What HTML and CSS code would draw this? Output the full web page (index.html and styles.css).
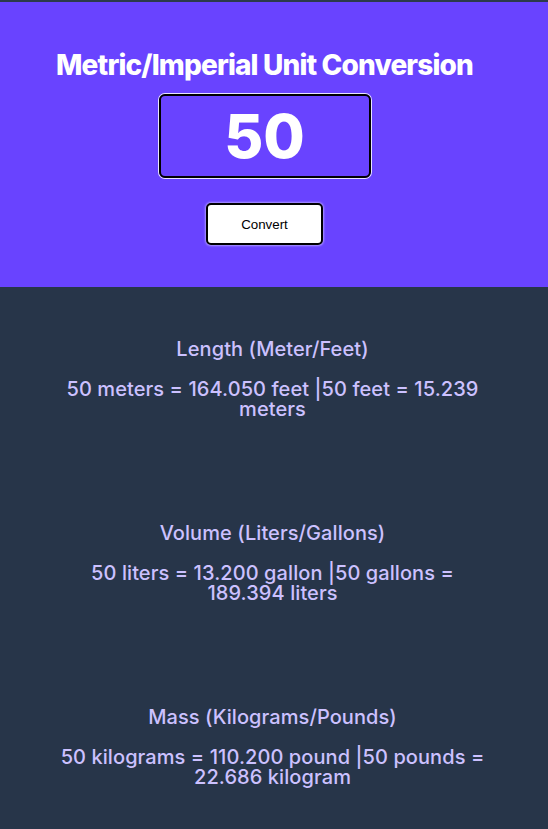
FILE: index.html
```html
<!DOCTYPE html>
<html lang="en">
<head>
<meta charset="utf-8">
<title>Unit Converter</title>
<link rel="stylesheet" href="styles.css">
</head>
<body>
<main class="page">
  <header class="hero">
    <h1 class="hero-title">Metric/Imperial Unit Conversion</h1>
    <input class="hero-input" type="text" value="50">
    <button class="hero-button" type="button">Convert</button>
  </header>
  <section class="results">
    <div class="card">
      <h2 class="card-title">Length (Meter/Feet)</h2>
      <p class="card-text">50 meters = 164.050 feet |50 feet = 15.239 meters</p>
    </div>
    <div class="card">
      <h2 class="card-title">Volume (Liters/Gallons)</h2>
      <p class="card-text">50 liters = 13.200 gallon |50 gallons = 189.394 liters</p>
    </div>
    <div class="card">
      <h2 class="card-title">Mass (Kilograms/Pounds)</h2>
      <p class="card-text">50 kilograms = 110.200 pound |50 pounds = 22.686 kilogram</p>
    </div>
  </section>
</main>
</body>
</html>
```

FILE: styles.css
```css
* {
  box-sizing: border-box;
}

html, body {
  margin: 0;
  padding: 0;
  background: #273549;
}

body {
  font-family: Inter, "Noto Sans", sans-serif;
  min-height: 829px;
}

.page {
  border-top: 2px solid #2c3a4b;
}

.hero {
  background: #6943ff;
  display: flex;
  flex-direction: column;
  align-items: center;
  padding: 46px 19px 42px 0;
}

.hero-title {
  margin: 0;
  color: #ffffff;
  font-size: 28px;
  font-weight: 800;
  letter-spacing: -0.85px;
  line-height: 34px;
}

.hero-input {
  margin-top: 12px;
  width: 212px;
  height: 84px;
  border: 2px solid #000;
  border-radius: 6px;
  box-shadow: 0 0 0 1px rgba(255, 255, 255, 0.85);
  background: transparent;
  color: #ffffff;
  font-family: Inter, sans-serif;
  font-weight: 800;
  font-size: 60px;
  text-align: center;
  padding: 0;
}

.hero-button {
  margin-top: 25px;
  width: 117px;
  height: 42px;
  border: 2px solid #000;
  border-radius: 5px;
  background: #ffffff;
  box-shadow: 0 0 2px 1px rgba(255, 255, 255, 0.45);
  font-family: "Liberation Sans", Arial, sans-serif;
  font-size: 13.333px;
  color: #000;
  padding: 0;
}

.results {
  padding: 50px 3px 0 0;
  display: flex;
  flex-direction: column;
  align-items: center;
  gap: 102px;
}

.card {
  width: 432px;
  text-align: center;
  color: #ccc1ff;
}

.card-title {
  margin: 0;
  font-size: 20px;
  font-weight: 500;
  line-height: 24px;
  letter-spacing: 0.08px;
}

.card-text {
  margin: 18px 0 0;
  font-size: 20px;
  font-weight: 500;
  line-height: 20px;
  letter-spacing: 0.08px;
}
```
